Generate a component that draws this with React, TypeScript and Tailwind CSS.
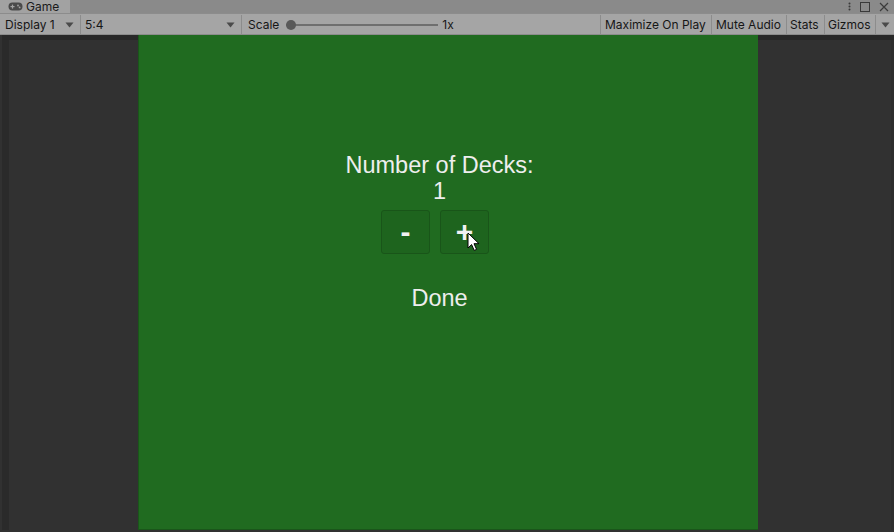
// Unity "Game" view: editor toolbar over a 5:4 green deck-count screen
const Caret = () => (
  <svg width="9" height="6" viewBox="0 0 9 6" className="shrink-0">
    <path d="M0.5 0.5h8L4.5 5.5z" fill="#4a4a4a" />
  </svg>
);

const Sep = () => <div className="w-px self-stretch bg-[#8c8c8c]" />;

const GamepadIcon = () => (
  <svg width="15" height="9" viewBox="0 0 15 9" className="shrink-0">
    <rect x="0.5" y="0.5" width="14" height="8" rx="4" fill="#4a4a4a" />
    <rect x="2.5" y="4" width="4" height="1.2" fill="#a3a3a3" />
    <rect x="3.9" y="2.6" width="1.2" height="4" fill="#a3a3a3" />
    <circle cx="10" cy="3.5" r="0.9" fill="#a3a3a3" />
    <circle cx="11.6" cy="5.4" r="0.9" fill="#a3a3a3" />
  </svg>
);

const Cursor = () => (
  <svg width="13" height="20" viewBox="0 0 13 20">
    <path
      d="M1 1v15l3.6-3.4 2.6 5.8 2.4-1-2.6-5.7H12z"
      fill="#ffffff"
      stroke="#000000"
      strokeWidth="1"
      strokeLinejoin="round"
    />
  </svg>
);

const StepButton = ({ label }: { label: string }) => (
  <button className="w-[49px] h-[44px] flex items-center justify-center rounded-[3px] border border-[#195519] bg-[#1e641e] text-[30px] font-bold leading-none text-[#f2f2f2]">
    {label}
  </button>
);

export default function App() {
  return (
    <div
      className="w-[894px] h-[532px] flex flex-col bg-[#8a8a8a] overflow-hidden"
      style={{ fontFamily: "Inter, 'Liberation Sans', sans-serif" }}
    >
      {/* tab strip */}
      <div className="h-[13px] flex items-stretch bg-[#8a8a8a]">
        <div className="w-[70px] flex items-center gap-[3px] pl-[8px] bg-[#a2a2a2] text-[12px] leading-none text-[#1a1a1a]">
          <GamepadIcon />
          <span>Game</span>
        </div>
        <div className="flex-1" />
        <div className="flex items-center gap-[9px] pr-[5px] text-[#3a3a3a]">
          <svg width="3" height="9" viewBox="0 0 3 9">
            <circle cx="1.5" cy="1.5" r="1" fill="#3a3a3a" />
            <circle cx="1.5" cy="4.5" r="1" fill="#3a3a3a" />
            <circle cx="1.5" cy="7.5" r="1" fill="#3a3a3a" />
          </svg>
          <svg width="10" height="10" viewBox="0 0 10 10">
            <rect x="0.5" y="0.5" width="9" height="9" fill="none" stroke="#3a3a3a" />
          </svg>
          <svg width="10" height="10" viewBox="0 0 10 10">
            <path d="M1 1l8 8M9 1l-8 8" stroke="#3a3a3a" strokeWidth="1.2" />
          </svg>
        </div>
      </div>

      {/* toolbar */}
      <div className="h-[22px] flex items-stretch bg-[#a5a5a5] border-y border-[#8c8c8c] pt-[1px] text-[12px] text-[#161616] leading-none">
        <div className="w-[80px] flex items-center justify-between pl-[5px] pr-[6px]">
          <span>Display 1</span>
          <Caret />
        </div>
        <Sep />
        <div className="w-[160px] flex items-center justify-between pl-[4px] pr-[6px]">
          <span>5:4</span>
          <Caret />
        </div>
        <Sep />
        <div className="w-[358px] flex items-center pl-[6px]">
          <span>Scale</span>
          <div className="relative ml-[7px] w-[152px] h-[10px] flex items-center">
            <div className="w-full h-[2px] bg-[#6f6f6f]" />
            <div className="absolute left-0 w-[10px] h-[10px] rounded-full bg-[#595959]" />
          </div>
          <span className="ml-[4px]">1x</span>
        </div>
        <Sep />
        <div className="w-[110px] flex items-center pl-[4px]">Maximize On Play</div>
        <Sep />
        <div className="w-[74px] flex items-center pl-[4px]">Mute Audio</div>
        <Sep />
        <div className="w-[37px] flex items-center pl-[3px]">Stats</div>
        <Sep />
        <div className="w-[50px] flex items-center pl-[3px]">Gizmos</div>
        <Sep />
        <div className="flex-1 flex items-center justify-center">
          <Caret />
        </div>
      </div>

      {/* game area */}
      <div className="flex-1 flex bg-[#313131] pl-[2px]">
        <div className="flex-1 flex border-t-[5px] border-[#282828] mb-[2px]">
          <div className="w-[136px] border-l-[7px] border-[#2a2a2a]" />
          <div
            className="relative -mt-[5px] w-[620px] flex flex-col items-center pr-[18px] bg-[#206b20] border-l border-b border-[#1a561a] text-[#eeeeee]"
            style={{ fontFamily: "'Liberation Sans', Arial, sans-serif" }}
          >
            <div className="mt-[117px] text-[23.5px] leading-[26px] text-center">
              <div>Number of Decks:</div>
              <div>1</div>
            </div>
            <div className="mt-[6px] flex gap-[10px] mr-[9px]">
              <StepButton label="-" />
              <StepButton label="+" />
            </div>
            <div className="mt-[31px] text-[23.5px] leading-[26px]">Done</div>
            <div className="absolute left-[328px] top-[197px]">
              <Cursor />
            </div>
          </div>
          <div className="flex-1 border-r-[3px] border-[#2d2d2d]" />
        </div>
      </div>
    </div>
  );
}
